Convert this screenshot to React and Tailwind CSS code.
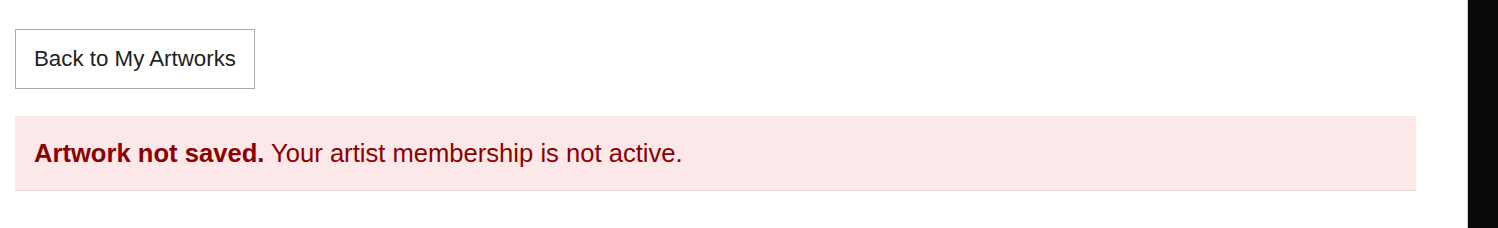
export default function App() {
  return (
    <div className="flex h-[228px] w-[1498px] bg-white" style={{ fontFamily: '"Liberation Sans", Arial, sans-serif' }}>
      <div className="flex-1 border-r border-[#d0d0d0]">
        <div className="w-[1401px] ml-[15px] pt-[29px]">
          <button className="h-[60px] border border-[#a9a9a9] bg-white px-[18px] text-[22.3px] text-[#222]">
            Back to My Artworks
          </button>
          <div className="mt-[27px] h-[75px] flex items-center bg-[#fce8e8] border-b border-[#e6dada] px-[19px] text-[25.6px] text-[#8b0000]">
            <span><b>Artwork not saved.</b> Your artist membership is not active.</span>
          </div>
        </div>
      </div>
      <div className="w-[30px] bg-[#0a0a0a]" />
    </div>
  );
}
